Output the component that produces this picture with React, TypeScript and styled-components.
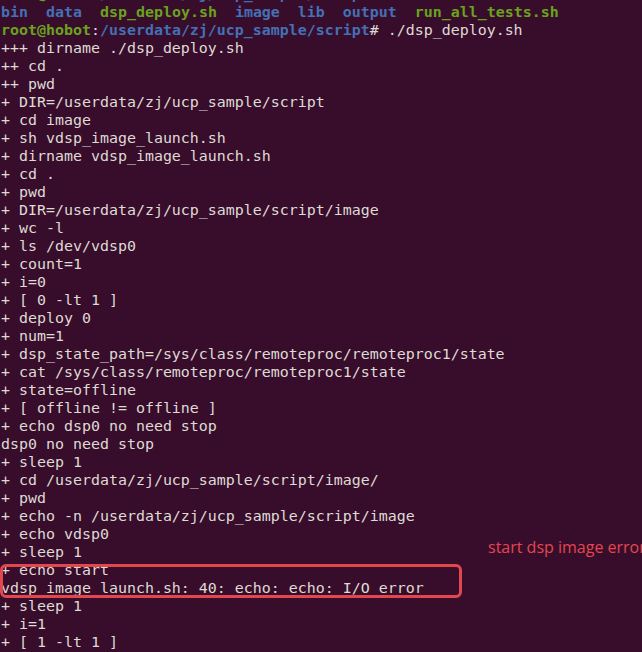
import React from "react";
import styled, { createGlobalStyle } from "styled-components";

const Global = createGlobalStyle`
  html, body { margin: 0; padding: 0; background: #380d2b; overflow: hidden; }
  #root { width: 642px; height: 652px; }
`;

const Screen = styled.div`
  position: relative;
  width: 642px;
  height: 652px;
  overflow: hidden;
  background: #380d2b;
`;

const Terminal = styled.pre`
  margin: -15px 0 0 0;
  padding: 0 0 0 1px;
  font-family: "DejaVu Sans Mono", "Liberation Mono", monospace;
  font-size: 14.95px;
  line-height: 18px;
  color: #dedad4;
  white-space: pre;
`;

const Line = styled.div`
  height: 18px;
`;

const Tok = styled.span<{ $c?: "blue" | "green" | "plain" }>`
  font-weight: ${(p) => (p.$c && p.$c !== "plain" ? 700 : 400)};
  color: ${(p) =>
    p.$c === "blue" ? "#4470b4" : p.$c === "green" ? "#6aa21e" : "#dedad4"};
`;

const Highlight = styled.div`
  position: absolute;
  left: 0;
  top: 564px;
  width: 462px;
  height: 34px;
  box-sizing: border-box;
  border: 3px solid #e2474e;
  border-radius: 6px;
`;

const Note = styled.div`
  position: absolute;
  left: 488px;
  top: 536.5px;
  font-family: "Open Sans", "Noto Sans", sans-serif;
  font-size: 16px;
  line-height: 1.362;
  color: #e2474e;
  white-space: nowrap;
`;

const Prompt: React.FC<{ cmd: string }> = ({ cmd }) => (
  <Line>
    <Tok $c="green">root@hobot</Tok>
    <Tok>:</Tok>
    <Tok $c="blue">/userdata/zj/ucp_sample/script</Tok>
    <Tok>{"# " + cmd}</Tok>
  </Line>
);

const lines = [
  "+++ dirname ./dsp_deploy.sh",
  "++ cd .",
  "++ pwd",
  "+ DIR=/userdata/zj/ucp_sample/script",
  "+ cd image",
  "+ sh vdsp_image_launch.sh",
  "+ dirname vdsp_image_launch.sh",
  "+ cd .",
  "+ pwd",
  "+ DIR=/userdata/zj/ucp_sample/script/image",
  "+ wc -l",
  "+ ls /dev/vdsp0",
  "+ count=1",
  "+ i=0",
  "+ [ 0 -lt 1 ]",
  "+ deploy 0",
  "+ num=1",
  "+ dsp_state_path=/sys/class/remoteproc/remoteproc1/state",
  "+ cat /sys/class/remoteproc/remoteproc1/state",
  "+ state=offline",
  "+ [ offline != offline ]",
  "+ echo dsp0 no need stop",
  "dsp0 no need stop",
  "+ sleep 1",
  "+ cd /userdata/zj/ucp_sample/script/image/",
  "+ pwd",
  "+ echo -n /userdata/zj/ucp_sample/script/image",
  "+ echo vdsp0",
  "+ sleep 1",
  "+ echo start",
  "vdsp_image_launch.sh: 40: echo: echo: I/O error",
  "+ sleep 1",
  "+ i=1",
  "+ [ 1 -lt 1 ]",
];

const listing: { name: string; c: "blue" | "green" }[] = [
  { name: "bin", c: "blue" },
  { name: "data", c: "blue" },
  { name: "dsp_deploy.sh", c: "green" },
  { name: "image", c: "blue" },
  { name: "lib", c: "blue" },
  { name: "output", c: "blue" },
  { name: "run_all_tests.sh", c: "green" },
];

export default function App() {
  return (
    <Screen>
      <Global />
      <Terminal>
        <Prompt cmd="ls" />
        <Line>
          {listing.map((f, i) => (
            <React.Fragment key={f.name}>
              {i > 0 && <Tok>{"  "}</Tok>}
              <Tok $c={f.c}>{f.name}</Tok>
            </React.Fragment>
          ))}
        </Line>
        <Prompt cmd="./dsp_deploy.sh" />
        {lines.map((l, i) => (
          <Line key={i}>{l}</Line>
        ))}
      </Terminal>
      <Highlight />
      <Note>start dsp image error</Note>
    </Screen>
  );
}
